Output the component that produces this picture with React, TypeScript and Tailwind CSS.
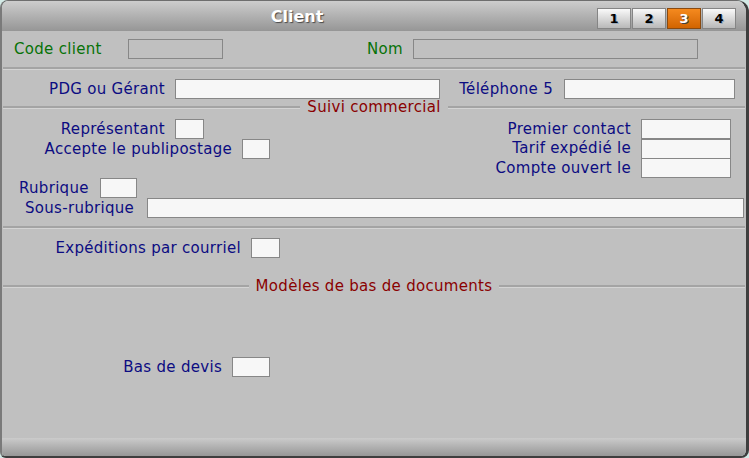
import React from "react";

function Box({ className = "", gray = false }: { className?: string; gray?: boolean }) {
  return (
    <div
      className={`h-[20px] shrink-0 border border-[#878787] ${gray ? "bg-[#c0c0c0]" : "bg-[#f7f7f7]"} ${className}`}
    />
  );
}

function Separator({ className = "" }: { className?: string }) {
  return <div className={`mx-[1px] h-[3px] border-t-2 border-b border-t-[#a4a4a4] border-b-[#d4d4d4] ${className}`} />;
}

function SectionTitle({ title, className = "" }: { title: string; className?: string }) {
  return (
    <div className={`mx-[1px] flex h-[16px] items-center ${className}`}>
      <div className="h-[3px] flex-1 border-t-2 border-b border-t-[#a4a4a4] border-b-[#d4d4d4]" />
      <span className="px-[7px] text-[15px] leading-none tracking-[0.3px] text-[#8a0000]">{title}</span>
      <div className="h-[3px] flex-1 border-t-2 border-b border-t-[#a4a4a4] border-b-[#d4d4d4]" />
    </div>
  );
}

function Tab({ n, active = false }: { n: number; active?: boolean }) {
  return (
    <div
      className={`flex h-[21px] w-[34px] items-center justify-center border text-[13px] font-bold ${
        active
          ? "border-[#8a4a10] bg-gradient-to-b from-[#f58a1e] to-[#d26400] text-white [text-shadow:1px_1px_0_#404040]"
          : "border-[#858585] bg-gradient-to-b from-[#fafafa] to-[#b9b9b9] text-black [text-shadow:1px_1px_0_#9ab]"
      }`}
    >
      {n}
    </div>
  );
}

export default function App() {
  const label = "whitespace-nowrap text-[15px] leading-none tracking-[0.3px] text-[#0c0c82]";

  return (
    <div className="h-[458px] w-[749px] bg-[#d3eae6] font-['DejaVu_Sans',Verdana,sans-serif]">
      <div className="flex h-full w-full flex-col overflow-hidden rounded-tl-[8px] rounded-tr-[12px] rounded-bl-[6px] rounded-br-[8px] border-t border-l-2 border-r-[3px] border-b-2 border-t-[#6e6e6e] border-l-[#7a7a7a] border-r-[#3e3e3e] border-b-[#3e3e3e]">
        {/* title bar */}
        <div className="flex h-[30px] shrink-0 bg-gradient-to-b from-[#cdcdcd] to-[#969696]">
          <div className="flex flex-1 items-center justify-center pt-[2px] pr-[5px] text-[16px] font-bold text-white [text-shadow:1px_1px_1px_#4a4a4a]">
            Client
          </div>
          <div className="mr-[10px] flex gap-[1px] pt-[7px]">
            <Tab n={1} />
            <Tab n={2} />
            <Tab n={3} active />
            <Tab n={4} />
          </div>
        </div>

        {/* body */}
        <div className="flex flex-1 flex-col bg-[#c0c0c0]">
          <div className="mt-[8px] flex h-[20px] items-center">
            <span className="ml-[12px] w-[114px] whitespace-nowrap text-[15px] leading-none tracking-[0.3px] text-[#077207]">Code client</span>
            <Box gray className="w-[95px]" />
            <span className="ml-[144px] w-[46px] whitespace-nowrap text-[15px] leading-none tracking-[0.3px] text-[#077207]">Nom</span>
            <Box gray className="w-[285px]" />
          </div>

          <Separator className="mt-[8px]" />

          <div className="mt-[9px] flex h-[20px] items-center">
            <span className={`${label} w-[163px] text-right`}>PDG ou Gérant</span>
            <Box className="ml-[10px] w-[265px]" />
            <span className={`${label} w-[113px] text-right`}>Téléphone 5</span>
            <Box className="ml-[11px] w-[171px]" />
          </div>

          <SectionTitle title="Suivi commercial" />

          <div className="mt-[4px] flex">
            <div className="flex flex-col">
              <div className="flex h-[20px] items-center">
                <span className={`${label} w-[163px] text-right`}>Représentant</span>
                <Box className="ml-[10px] w-[29px]" />
              </div>
              <div className="flex h-[20px] items-center">
                <span className={`${label} w-[230px] text-right`}>Accepte le publipostage</span>
                <Box className="ml-[10px] w-[28px]" />
              </div>
            </div>
            <div className="mr-[15px] ml-auto flex flex-col items-end">
              <div className="flex h-[20px] items-center">
                <span className={label}>Premier contact</span>
                <Box className="ml-[10px] w-[90px]" />
              </div>
              <div className="flex h-[19px] items-center">
                <span className={label}>Tarif expédié le</span>
                <Box className="ml-[10px] w-[90px]" />
              </div>
              <div className="flex h-[20px] items-center">
                <span className={label}>Compte ouvert le</span>
                <Box className="ml-[10px] w-[90px]" />
              </div>
            </div>
          </div>

          <div className="flex h-[20px] items-center">
            <span className={`${label} ml-[17px] w-[81px]`}>Rubrique</span>
            <Box className="w-[37px]" />
          </div>
          <div className="flex h-[20px] items-center">
            <span className={`${label} ml-[23px] w-[122px]`}>Sous-rubrique</span>
            <Box className="mr-[2px] flex-1" />
          </div>

          <Separator className="mt-[8px]" />

          <div className="mt-[9px] flex h-[20px] items-center">
            <span className={`${label} w-[239px] text-right`}>Expéditions par courriel</span>
            <Box className="ml-[10px] w-[29px]" />
          </div>

          <SectionTitle title="Modèles de bas de documents" className="mt-[20px]" />

          <div className="mt-[63px] flex h-[20px] items-center">
            <span className={`${label} w-[220px] text-right`}>Bas de devis</span>
            <Box className="ml-[10px] w-[38px]" />
          </div>
        </div>

        {/* bottom bar */}
        <div className="h-[18px] shrink-0 bg-gradient-to-b from-[#cbcbcb] to-[#979797]" />
      </div>
    </div>
  );
}
